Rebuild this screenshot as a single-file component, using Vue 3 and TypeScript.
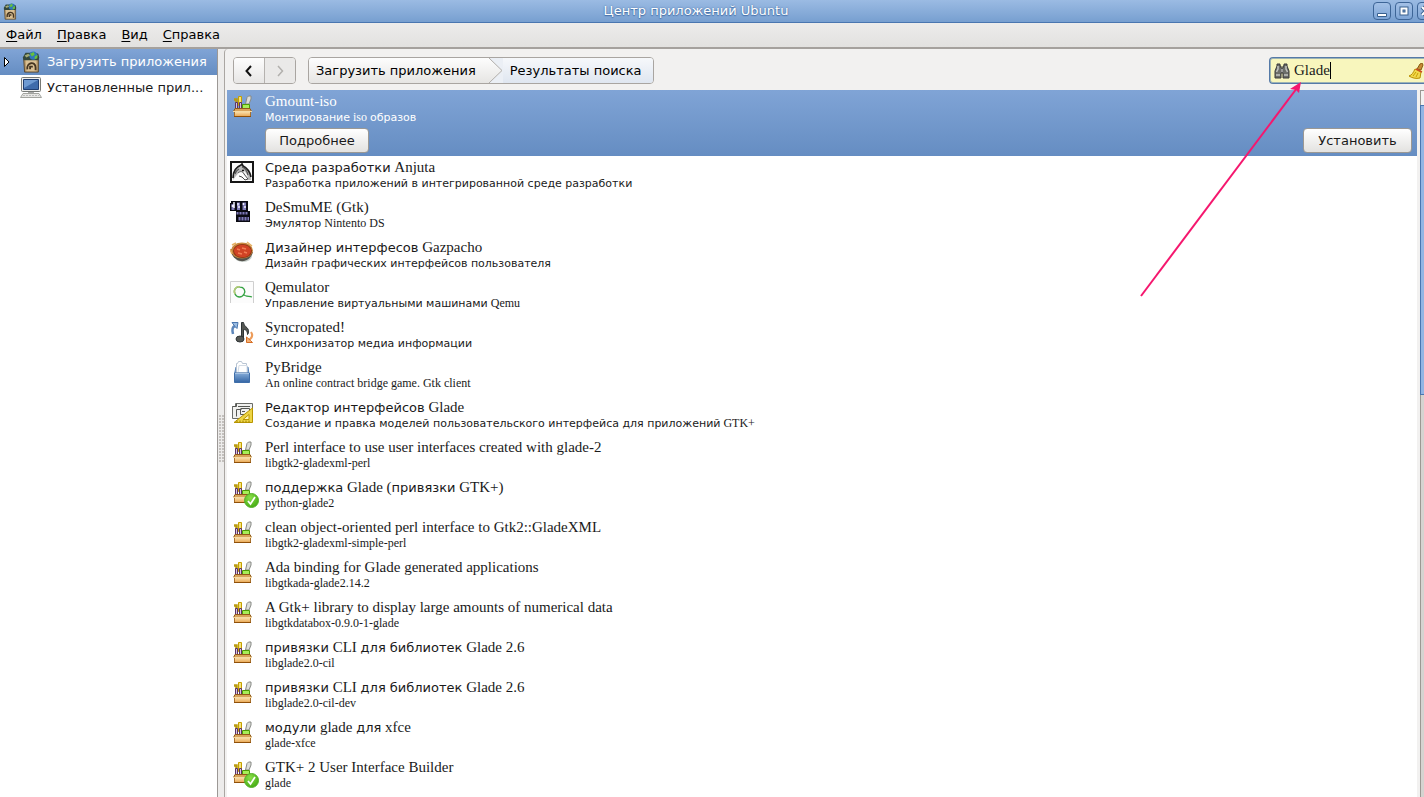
<script setup lang="ts">
import { ref } from 'vue'

interface Run {
  text: string
  latin: boolean
}

interface Item {
  title: string
  summary: string
  icon: string
  installed?: boolean
}

const menus: [string, string][] = [
  ['Ф', 'айл'],
  ['П', 'равка'],
  ['В', 'ид'],
  ['С', 'правка'],
]

const query = ref('Glade')

const items: Item[] = [
  { title: 'Среда разработки Anjuta', summary: 'Разработка приложений в интегрированной среде разработки', icon: 'horse' },
  { title: 'DeSmuME (Gtk)', summary: 'Эмулятор Nintento DS', icon: 'desmume' },
  { title: 'Дизайнер интерфесов Gazpacho', summary: 'Дизайн графических интерфейсов пользователя', icon: 'soup' },
  { title: 'Qemulator', summary: 'Управление виртуальными машинами Qemu', icon: 'qemu' },
  { title: 'Syncropated!', summary: 'Синхронизатор медиа информации', icon: 'note' },
  { title: 'PyBridge', summary: 'An online contract bridge game. Gtk client', icon: 'tray' },
  { title: 'Редактор интерфейсов Glade', summary: 'Создание и правка моделей пользовательского интерфейса для приложений GTK+', icon: 'glade' },
  { title: 'Perl interface to use user interfaces created with glade-2', summary: 'libgtk2-gladexml-perl', icon: 'toolbox' },
  { title: 'поддержка Glade (привязки GTK+)', summary: 'python-glade2', icon: 'toolbox', installed: true },
  { title: 'clean object-oriented perl interface to Gtk2::GladeXML', summary: 'libgtk2-gladexml-simple-perl', icon: 'toolbox' },
  { title: 'Ada binding for Glade generated applications', summary: 'libgtkada-glade2.14.2', icon: 'toolbox' },
  { title: 'A Gtk+ library to display large amounts of numerical data', summary: 'libgtkdatabox-0.9.0-1-glade', icon: 'toolbox' },
  { title: 'привязки CLI для библиотек Glade 2.6', summary: 'libglade2.0-cil', icon: 'toolbox' },
  { title: 'привязки CLI для библиотек Glade 2.6', summary: 'libglade2.0-cil-dev', icon: 'toolbox' },
  { title: 'модули glade для xfce', summary: 'glade-xfce', icon: 'toolbox' },
  { title: 'GTK+ 2 User Interface Builder', summary: 'glade', icon: 'toolbox', installed: true },
]

/* Latin words use the serif face, Cyrillic words the sans face. */
function runs(text: string): Run[] {
  return (text.match(/[А-Яа-яЁё]+(?:\s+[А-Яа-яЁё]+)*|[^А-Яа-яЁё]+/g) ?? []).map((part) => ({
    text: part,
    latin: !/[А-Яа-яЁё]/.test(part),
  }))
}
</script>

<template>
  <div class="window">
    <svg class="defs" aria-hidden="true">
      <defs>
        <linearGradient id="boxFront" x1="0" y1="0" x2="0" y2="1">
          <stop offset="0" stop-color="#fbe3b0" />
          <stop offset="1" stop-color="#e8a550" />
        </linearGradient>
        <linearGradient id="trayFront" x1="0" y1="0" x2="0" y2="1">
          <stop offset="0" stop-color="#84abd8" />
          <stop offset="1" stop-color="#3465a4" />
        </linearGradient>
        <radialGradient id="okFill" cx=".4" cy=".3" r=".8">
          <stop offset="0" stop-color="#8be04a" />
          <stop offset="1" stop-color="#3da50c" />
        </radialGradient>
      </defs>
      <symbol id="toolbox" viewBox="0 0 24 24">
        <path d="M4 5.500h2.500v3.500" fill="none" stroke="#b99a10" stroke-width="2.500" />
        <path d="M8.500 2.500h3v9h-3z" fill="#f6e27a" stroke="#c4a000" />
        <path d="M15.500 10l1.500-6.500 1.500-1.500h2.500v3L19 10z" fill="#dcddda" stroke="#888a85" />
        <path d="M5.500 8.500h2v7h-2z" fill="#d8c4dc" stroke="#5c3566" />
        <path d="M9.500 8.500h2v7h-2z" fill="#d8c4dc" stroke="#5c3566" />
        <path d="M12.500 10.500h7v4h-7z" fill="#a7ef58" stroke="#4e9a06" />
        <path d="M5 14.500h15l1.500 3h-18z" fill="#d9a35a" stroke="#8f5a18" />
        <path d="M4.500 17.500h16v5h-16z" fill="url(#boxFront)" stroke="#a9702b" />
        <path d="M3 17.500h19" stroke="#f4dba5" />
        <path d="M4 22.500h17" stroke="#8f4f08" />
      </symbol>
      <symbol id="horse" viewBox="0 0 24 24">
        <path d="M1 2h22v20H1z" fill="#fbfbfb" stroke="#161616" stroke-width="2" />
        <path d="M3 20C2 12 5 7 10 5l1-1 2 1c5 2 8 8 8 15h-3c0-4-1-7-4-9-3 0-6 2-8 5z" fill="#b9b9b9" />
        <path d="M3 18C3 11 6 7 11 5l1-1 1 2c4 2 7 6 8 11" fill="none" stroke="#1c1c1c" stroke-width="1.700" />
        <path d="M8 13c2-2 5-2 6 1l4 5-3 1-3-3-3-1" fill="#fff" stroke="#4a4a4a" />
        <path d="M12 7c3 1 5 4 6 8M5 14c1-3 2-4 4-5" fill="none" stroke="#555" stroke-width="1.200" />
        <path d="M12 10.500h2" stroke="#111" stroke-width="1.500" />
      </symbol>
      <symbol id="desmume" viewBox="0 0 24 24">
        <path d="M0 3h1V1h17v10h2v11H6V11H0z" fill="#0a0a12" />
        <path d="M1.500 4h3v6h-3zM7 2.500h3v7.500H7zM12.500 2.500h3.500v7.500h-3.500zM6.500 12h11v2.500h-11zM8.500 17H19v3.500H8.500z" fill="#7f7bb8" />
        <path d="M4 2v6M2.500 5v2M8 3v2.500M8 7h2M13.500 3v2M14 7h2" stroke="#f0f0fa" stroke-width="1.500" />
        <path d="M9 11.500V15M12 12v3M15 12v3M11 16.500V21M14 16.500V21M17 16.500V21" stroke="#15132a" />
      </symbol>
      <symbol id="soup" viewBox="0 0 24 24">
        <ellipse cx="13" cy="16" rx="9" ry="6" fill="#c6cec9" />
        <path d="M0 9c2 9 8 13 14 12 5-1 8-5 9-9z" fill="#54524c" />
        <ellipse cx="12" cy="10.500" rx="11" ry="8" fill="#c88a41" />
        <ellipse cx="12.500" cy="11" rx="9.500" ry="7" fill="#8c3512" />
        <ellipse cx="12.500" cy="11" rx="8.500" ry="6.200" fill="#d04325" />
        <path d="M7 9l3 1M12 8l4 1M14 12l3 1M8 13l4 1" stroke="#f27e55" stroke-width="1.500" />
        <path d="M2 5l4-2M17 2l5 4M0 9l2 5" stroke="#e5b163" stroke-width="1.500" />
      </symbol>
      <symbol id="qemu" viewBox="0 0 24 24">
        <path d="M.5 23V1.500h23V23" fill="#fcfcfc" stroke="#cfcfcf" />
        <path d="M5 14c-2-4 1-8 5-7 4 0 6 4 4 7-2 4-7 4-9 0zM13 14c2 3 6 2 9 3" fill="none" stroke="#36a344" stroke-width="1.300" />
        <path d="M5 14c-2-4 1-8 5-7" fill="none" stroke="#b7cb77" stroke-width="1.500" />
      </symbol>
      <symbol id="note" viewBox="0 0 24 24">
        <path d="M6 6C2 6 2 10 3 14" fill="none" stroke="#5d86ba" stroke-width="2.500" />
        <path d="M2 2.500l6 0-1 6-2-2z" fill="#9abce2" stroke="#4a76ae" />
        <path d="M11.500 19V2.500h2c0 4 5 5 5 8 0 2 0 3-1 4 0-4-2-5-4-5v9" fill="#555753" stroke="#2e3436" />
        <ellipse cx="10" cy="19" rx="4" ry="3" fill="#555753" stroke="#2e3436" />
        <path d="M21 12c2 3 1 6-2 8" fill="none" stroke="#ed9c5a" stroke-width="2" />
        <path d="M16.500 17v5.500h6l-2-2z" fill="#f4b175" stroke="#d56d25" />
      </symbol>
      <symbol id="tray" viewBox="0 0 24 24">
        <path d="M6 7h12l1 7H4.500z" fill="#7ea3cf" stroke="#5b86ba" />
        <path d="M6.500 13V3.500h1l1-2h3l1 2h4V13z" fill="#fff" stroke="#b9c5d3" />
        <path d="M9 5.500h8v7H8z" fill="#fff" stroke="#d3dbe5" />
        <path d="M4.500 13h15v9.500h-15z" fill="url(#trayFront)" stroke="#3f6ea9" />
        <path d="M5 13.500h14" stroke="#a7c3e3" />
      </symbol>
      <symbol id="glade" viewBox="0 0 24 24">
        <path d="M5.500 3.500h17v15h-20v-12h3z" fill="#f1f1ef" stroke="#6a6c68" />
        <path d="M2.500 6.500h4v-3M8 6.500h12M6.500 9.500h5M6.500 9.500v7M10.500 9.500v5h9v-6h-9M12 11.500h3" fill="none" stroke="#555753" />
        <path d="M4 22.500L22.500 8v14.500z" fill="#edd445" stroke="#b99600" />
        <path d="M13 19.500l6-5v5z" fill="#fff7bb" stroke="#b99600" />
        <path d="M7 22.500v-2M10 22.500v-2M13 22.500v-2M16 22.500v-2M19 22.500v-2" stroke="#9c7f00" />
      </symbol>
      <symbol id="ok" viewBox="0 0 15 15">
        <circle cx="7.500" cy="7.500" r="7" fill="url(#okFill)" stroke="#55b02a" />
        <path d="M4 8l2.500 3L11 4" fill="none" stroke="#fff" stroke-width="1.700" />
      </symbol>
      <symbol id="bag" viewBox="0 0 20 24">
        <path d="M2 8h16v15H3z" fill="#b79869" stroke="#55452c" />
        <path d="M4 9h12v13H5z" fill="#d9c094" />
        <path d="M1 7l3-5 5 0 3-1 6 2 1 4-1 3H2z" fill="#33473c" />
        <circle cx="12.500" cy="5" r="4.500" fill="#3077bb" />
        <path d="M9 3l4-2 1 3-3 2zM14 6l3-2v4l-3 1z" fill="#66c13c" />
        <path d="M3 5l4-2 2 2-4 2z" fill="#a3aa72" />
        <path d="M6 20c-1-8 9-9 9-2v3M9 20v-3h3" fill="none" stroke="#453522" stroke-width="2" />
      </symbol>
      <symbol id="computer" viewBox="0 0 22 22">
        <rect x="1.500" y=".5" width="19" height="14" rx="1" fill="#eeeeec" stroke="#777a76" />
        <path d="M3.500 2.500h15v10h-15z" fill="#3f6cab" stroke="#203f72" />
        <path d="M4 3h14L4 11z" fill="#6f9bd2" />
        <path d="M8 15h6v2H8z" fill="#aaa" />
        <path d="M3 16.500h16l2.500 4H.5z" fill="#e6e6e3" stroke="#a2a49f" />
        <path d="M3 18.500h16" stroke="#bbb" stroke-dasharray="2 1" />
      </symbol>
      <symbol id="binoculars" viewBox="0 0 16 16">
        <path d="M3 1h3v2h1v2h2V3h1V1h3v2l2 5v7H9v-5H7v5H1V8l2-5z" fill="#6b6d69" stroke="#3b3b3b" />
        <path d="M4 3v3L2.500 9M12 3v3l1.500 3M2 12h4M10 12h4" fill="none" stroke="#c2c4c0" stroke-width="1.500" />
        <path d="M7 6h2v3H7z" fill="#999" />
      </symbol>
      <symbol id="broom" viewBox="0 0 16 16">
        <path d="M9 6l3-5 2-1 1 2-2 5z" fill="#c98b36" stroke="#875a12" />
        <path d="M7 6l6 3-1 6c-4 1-8 0-11-2 3-1 4-3 6-7z" fill="#f1d84c" stroke="#b98e00" />
        <path d="M8 6l6 3" stroke="#cc4e22" stroke-width="1.500" />
        <path d="M8 9l-3 4M10 10l-2 4" stroke="#c9a000" />
      </symbol>
    </svg>

    <header class="titlebar">
      <svg class="app-icon"><use href="#bag" /></svg>
      <h1>Центр приложений Ubuntu</h1>
      <div class="controls">
        <button type="button" aria-label="Свернуть">
          <svg viewBox="0 0 16 16"><path d="M3.500 10.500h9v3h-9z" fill="#fff" stroke="#39608f" /></svg>
        </button>
        <button type="button" aria-label="Развернуть">
          <svg viewBox="0 0 16 16"><path d="M5.500 5.500h5v5h-5z" fill="none" stroke="#39608f" stroke-width="4" /><path d="M5.500 5.500h5v5h-5z" fill="none" stroke="#fff" stroke-width="2" /></svg>
        </button>
        <button type="button" aria-label="Закрыть">
          <svg viewBox="0 0 16 16"><path d="M4 4l8 8M12 4l-8 8" stroke="#39608f" stroke-width="4" /><path d="M4 4l8 8M12 4l-8 8" stroke="#fff" stroke-width="2" /></svg>
        </button>
      </div>
    </header>

    <nav class="menubar">
      <button v-for="[key, rest] in menus" :key="key" type="button"><u>{{ key }}</u>{{ rest }}</button>
    </nav>

    <div class="body">
      <aside class="sidebar">
        <button type="button" class="source selected">
          <svg class="expander" viewBox="0 0 8 12"><path d="M1.500 1.500l4.500 4.500-4.500 4.500z" fill="#fff" stroke="#000" /></svg>
          <svg class="source-icon"><use href="#bag" /></svg>
          <span>Загрузить приложения</span>
        </button>
        <button type="button" class="source">
          <span class="expander"></span>
          <svg class="source-icon"><use href="#computer" /></svg>
          <span>Установленные прил...</span>
        </button>
      </aside>

      <div class="splitter"><span class="grip"></span></div>

      <main class="content">
        <div class="toolbar">
          <div class="history">
            <button type="button" aria-label="Назад">
              <svg viewBox="0 0 14 14"><path d="M9 2L4.500 7 9 12" fill="none" stroke="#111" stroke-width="2" /></svg>
            </button>
            <button type="button" aria-label="Вперёд" disabled>
              <svg viewBox="0 0 14 14"><path d="M5 2l4.500 5L5 12" fill="none" stroke="#b2b0ad" stroke-width="1.500" /></svg>
            </button>
          </div>
          <div class="path">
            <button type="button" class="crumb">Загрузить приложения</button>
            <svg class="chevron" viewBox="0 0 14 25" preserveAspectRatio="none">
              <path d="M0 0h14v25H0l13-12z" fill="#ebeff5" />
              <path d="M0 0l13 12.500L0 25" fill="none" stroke="#b1aeaa" />
            </svg>
            <button type="button" class="crumb active">Результаты поиска</button>
          </div>
          <div class="search">
            <svg class="search-icon"><use href="#binoculars" /></svg>
            <div class="entry">
              <input v-model="query" type="text" aria-label="Поиск" />
              <span class="caret"></span>
            </div>
            <button type="button" aria-label="Очистить"><svg><use href="#broom" /></svg></button>
          </div>
        </div>

        <div class="pane">
          <ul class="list">
            <li class="item current">
              <svg class="item-icon"><use href="#toolbox" /></svg>
              <div class="text">
                <div class="title"><span class="latin">Gmount-iso</span></div>
                <div class="summary">Монтирование<span class="latin"> iso </span>образов</div>
                <div class="actions">
                  <button type="button" class="more">Подробнее</button>
                  <button type="button" class="install">Установить</button>
                </div>
              </div>
            </li>
            <li v-for="(item, index) in items" :key="index" class="item">
              <svg class="item-icon"><use :href="'#' + item.icon" /></svg>
              <svg v-if="item.installed" class="badge"><use href="#ok" /></svg>
              <div class="text">
                <div class="title">
                  <span v-for="(run, i) in runs(item.title)" :key="i" :class="{ latin: run.latin }">{{ run.text }}</span>
                </div>
                <div class="summary">
                  <span v-for="(run, i) in runs(item.summary)" :key="i" :class="{ latin: run.latin }">{{ run.text }}</span>
                </div>
              </div>
            </li>
          </ul>
          <div class="scrollbar">
            <div class="step"></div>
            <div class="thumb"></div>
          </div>
        </div>

        <svg class="pointer" viewBox="0 0 164 218">
          <path d="M2 216L158 8" stroke="#f5176e" stroke-width="2" />
          <path d="M162 2l-2 11-3-3-6-1z" fill="#f5176e" />
        </svg>
      </main>
    </div>
  </div>
</template>

<style>
body {
  margin: 0;
}
</style>

<style scoped>
.window {
  height: 100vh;
  display: flex;
  flex-direction: column;
  overflow: hidden;
  background: #edeceb;
  color: #1a1a1a;
  font: 13px/20px "DejaVu Sans", sans-serif;
}
.defs {
  position: absolute;
  width: 0;
  height: 0;
}
button {
  margin: 0;
  padding: 0;
  border: 0;
  background: none;
  color: inherit;
  font: inherit;
  white-space: nowrap;
}
svg {
  display: block;
  flex: none;
}
.titlebar {
  flex: none;
  box-sizing: border-box;
  height: 23px;
  display: flex;
  align-items: center;
  justify-content: center;
  position: relative;
  border-bottom: 1px solid #4a76b0;
  background: linear-gradient(#9bbbe3, #779fd0);
}
.titlebar h1 {
  margin: 0;
  padding-right: 32px;
  color: #fff;
  font-size: 13px;
  font-weight: 400;
  text-shadow: 0 0 2px #3f689d, 0 1px 1px #4a76b0;
}
.app-icon {
  position: absolute;
  left: 3px;
  top: 3px;
  width: 14px;
  height: 17px;
}
.controls {
  position: absolute;
  left: calc(100% - 51px);
  top: 2px;
  display: flex;
  gap: 4px;
}
.controls button {
  flex: none;
  box-sizing: border-box;
  width: 18px;
  height: 18px;
  border: 1px solid #3d6597;
  border-radius: 4px;
  background: linear-gradient(#a3c0e6, #7ea5d6);
}
.controls svg {
  width: 16px;
  height: 16px;
}
.menubar {
  flex: none;
  box-sizing: border-box;
  height: 26px;
  display: flex;
  gap: 15px;
  padding: 0 6px;
  border-bottom: 2px solid #a5a19d;
  background: linear-gradient(#edeceb, #e2e1df);
}
.menubar button {
  color: #000;
  line-height: 24px;
}
.menubar u {
  text-underline-offset: 2px;
}
.body {
  flex: 1;
  min-height: 0;
  display: flex;
}
.sidebar {
  flex: none;
  width: 217px;
  border-right: 1px solid #9c9895;
  background: #fff;
}
.source {
  box-sizing: border-box;
  width: 100%;
  height: 26px;
  display: flex;
  align-items: center;
  padding: 0 4px 0 3px;
  text-align: left;
}
.source.selected {
  background: linear-gradient(#80a4d6, #658dc2);
  color: #fff;
}
.expander {
  flex: none;
  width: 8px;
  height: 12px;
}
.source-icon {
  width: 22px;
  height: 22px;
  margin: 0 5px 0 9px;
}
.splitter {
  flex: none;
  width: 6px;
  display: flex;
  align-items: center;
  justify-content: center;
}
.grip {
  width: 5px;
  height: 48px;
  margin-top: 32px;
  background: radial-gradient(circle at 1px 1px, #c4c1be 1px, transparent 1px) 0 0 / 3px 3px;
}
.content {
  flex: 1;
  min-width: 0;
  display: flex;
  flex-direction: column;
  position: relative;
  border-left: 1px solid #aaa6a2;
  border-top-left-radius: 4px;
  background: #f2f1f0;
}
.toolbar {
  flex: none;
  box-sizing: border-box;
  height: 41px;
  display: flex;
  align-items: center;
  gap: 12px;
  padding: 2px 0 0 8px;
}
.history,
.path {
  box-sizing: border-box;
  height: 27px;
  display: flex;
  border: 1px solid #a9a5a1;
  border-radius: 4px;
  overflow: hidden;
}
.history button {
  width: 30px;
  display: flex;
  align-items: center;
  justify-content: center;
  background: linear-gradient(#fdfdfd, #e7e6e5);
}
.history button + button {
  width: 31px;
  border-left: 1px solid #b5b2af;
  background: #eae9e8;
}
.history svg {
  width: 14px;
  height: 14px;
}
.crumb {
  padding: 0 13px 0 7px;
  background: linear-gradient(#fdfdfd, #e6e5e3);
  color: #000;
}
.chevron {
  width: 14px;
  height: 25px;
  background: linear-gradient(#fdfdfd, #e6e5e3);
}
.crumb.active {
  padding: 0 11px 0 7px;
  background: linear-gradient(#f6f8fb, #dfe6f0);
}
.search {
  box-sizing: border-box;
  width: 155px;
  height: 27px;
  display: flex;
  align-items: center;
  margin-left: auto;
  padding-left: 4px;
  border: 1px solid #557aa8;
  border-right: 0;
  border-radius: 4px 0 0 4px;
  background: #f8f6bd;
  box-shadow: inset 1px 0 #9db3b5, inset 0 1px #9db3b5, inset 0 -1px #9db3b5;
}
.search-icon,
.search button svg {
  width: 16px;
  height: 16px;
}
.entry {
  flex: 1;
  min-width: 0;
  position: relative;
}
.search input {
  box-sizing: border-box;
  width: 100%;
  padding: 0 4px;
  border: 0;
  outline: 0;
  background: none;
  color: #1a1a1a;
  font: 15px/20px "Liberation Serif", serif;
}
.caret {
  position: absolute;
  left: 40px;
  top: 2px;
  width: 1px;
  height: 17px;
  background: #000;
}
.pane {
  flex: 1;
  min-height: 0;
  display: flex;
  padding-left: 2px;
}
.list {
  flex: 1;
  min-width: 0;
  margin: 0;
  padding: 0;
  overflow: hidden;
  list-style: none;
  background: #fff;
}
.item {
  box-sizing: border-box;
  height: 40px;
  display: flex;
  gap: 11px;
  position: relative;
  padding: 3px 5px 0 3px;
}
.item.current {
  height: 66px;
  background: linear-gradient(#80a4d6, #658dc2);
  color: #fff;
}
.item-icon {
  width: 24px;
  height: 24px;
  margin-top: 1px;
}
.badge {
  position: absolute;
  left: 17px;
  top: 17px;
  width: 15px;
  height: 15px;
}
.text {
  flex: 1;
  min-width: 0;
}
.title,
.summary {
  white-space: pre;
}
.title {
  height: 17px;
  line-height: 17px;
}
.summary {
  height: 15px;
  font-size: 11px;
  line-height: 15px;
}
.latin {
  font-family: "Liberation Serif", serif;
}
.title .latin {
  font-size: 15px;
}
.summary .latin {
  font-size: 12px;
}
.actions {
  display: flex;
  justify-content: space-between;
  padding-top: 3px;
}
.actions button {
  box-sizing: border-box;
  height: 25px;
  border: 1px solid #9b9893;
  border-radius: 4px;
  background: linear-gradient(#fff, #e3e2e0);
  color: #1a1a1a;
}
.more {
  width: 104px;
}
.install {
  width: 109px;
}
.scrollbar {
  box-sizing: border-box;
  flex: none;
  width: 4px;
  margin-left: 3px;
  display: flex;
  flex-direction: column;
  border-left: 1px solid #9b9893;
  background: #d5d3d0;
}
.step {
  flex: none;
  box-sizing: border-box;
  height: 15px;
  border-top: 1px solid #9b9893;
  background: #f4f3f2;
}
.thumb {
  box-sizing: border-box;
  height: 41%;
  margin-left: -1px;
  border: 1px solid #4a76b0;
  border-right: 0;
  background: #92b5e4;
}
.pointer {
  position: absolute;
  right: 121px;
  top: 31px;
  width: 164px;
  height: 218px;
  pointer-events: none;
}
</style>
